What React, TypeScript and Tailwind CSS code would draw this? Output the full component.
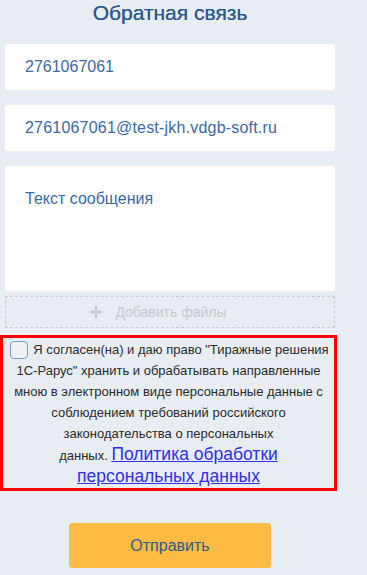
import { Plus } from "lucide-react";

const font = { fontFamily: '"Liberation Sans", Arial, sans-serif' };

const consentLines = [
  "хранить и обрабатывать направленные",
  "мною в электронном виде персональные данные с",
  "соблюдением требований российского",
  "законодательства о персональных",
];

export default function App() {
  return (
    <div className="min-h-[575px] w-full bg-[#e8edf4] text-[#3b69a2]" style={font}>
      <div className="ml-[5px] w-[330px] flex flex-col">
        {/* Title */}
        <h1 className="h-[44px] pt-[1px] text-center text-[21px] leading-[24px] text-[#2e5a8e] [text-shadow:0_0_0.4px_#2e5a8e]">
          Обратная связь
        </h1>

        {/* Fields */}
        <div className="flex h-[46px] items-center rounded-[3px] bg-white pl-[20px] text-[16px]">
          2761067061
        </div>
        <div className="mt-[15px] flex h-[46px] items-center rounded-[3px] bg-white pl-[20px] text-[16px] tracking-[0.2px]">
          2761067061@test-jkh.vdgb-soft.ru
        </div>
        <div className="mt-[15px] h-[125px] rounded-[3px] bg-white pl-[20px] pt-[22px] text-[16px] leading-[22px]">
          Текст сообщения
        </div>

        {/* Files */}
        <div className="mt-[5px] flex h-[32px] items-center justify-center gap-[10px] border border-dashed border-[#c9cdd3] pr-[26px] text-[14px] text-[#c6c9cc]">
          <Plus className="h-[18px] w-[18px]" strokeWidth={3.2} />
          <span>Добавить файлы</span>
        </div>

        {/* Consent */}
        <div className="-ml-[5px] mt-[7px] w-[337px] border-[3px] border-[#ff0000] pt-[1px] text-center text-[13px] leading-[21px] text-[#2b2b2b]">
          <div className="flex items-center justify-center gap-[5px] pl-[2px]">
            <span className="h-[18px] w-[18px] shrink-0 rounded-[4px] border border-[#7f9cc2] bg-[#eef2f7]" />
            <span className="whitespace-nowrap">Я согласен(на) и даю право "Тиражные решения</span>
          </div>
          <div className="whitespace-nowrap">1С-Рарус" {consentLines[0]}</div>
          {consentLines.slice(1).map((l) => (
            <div key={l} className="whitespace-nowrap">
              {l}
            </div>
          ))}
          <div>
            данных.{" "}
            <a href="#" className="text-[17.5px] text-[#2f2fee] underline">
              Политика обработки
            </a>
          </div>
          <div>
            <a href="#" className="text-[17.5px] text-[#2f2fee] underline">
              персональных данных
            </a>
          </div>
        </div>

        {/* Submit */}
        <div className="mt-[32px] flex justify-center pb-[8px]">
          <button className="h-[45px] w-[202px] rounded-[3px] bg-[#fdbb44] text-[16px] text-[#2e5a8e]">
            Отправить
          </button>
        </div>
      </div>
    </div>
  );
}
